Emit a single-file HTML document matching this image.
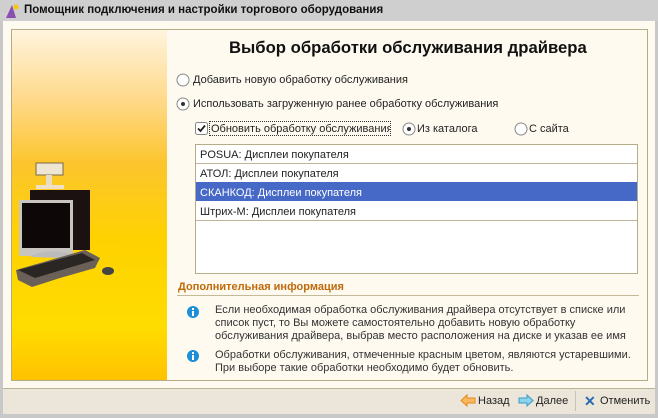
<!DOCTYPE html><html><head><meta charset="utf-8"><style>
*{margin:0;padding:0;box-sizing:border-box}
body{width:658px;height:418px;overflow:hidden;background:#c8c8c8;font-family:"Liberation Sans",sans-serif;font-size:11px;color:#222;position:relative}
.a{position:absolute}
.t{white-space:nowrap}
</style></head><body>
<div class="a" style="left:0;top:0;width:658px;height:21px;background:#cfcfcf"></div>
<svg class="a" style="left:4px;top:3px" width="16" height="16"><polygon points="2,15 8,2 12,15" fill="#8a4fb0"/><circle cx="12" cy="4" r="2.5" fill="#f2c800"/></svg>
<div class="a t" style="left:24px;top:4px;font-weight:bold;font-size:11.5px;color:#111">Помощник подключения и настройки торгового оборудования</div>
<div class="a" style="left:3px;top:21px;width:652px;height:393px;background:#fefaef"></div>
<div class="a" style="left:11px;top:29px;width:637px;height:352px;border:1px solid #b5ad88"></div>
<div class="a" style="left:12px;top:30px;width:155px;height:350px;background:linear-gradient(180deg,#fff4de 0%,#ffd98a 20%,#fcc52e 38%,#fed200 60%,#ffdc00 85%,#ffc200 100%)"></div>
<svg class="a" style="left:0;top:120px" width="167" height="200">
<rect x="36" y="43" width="27" height="12" fill="#eee6d2" stroke="#7a6a50"/><rect x="46" y="55" width="6" height="10" fill="#e8dcc4"/><rect x="36" y="65" width="28" height="4" fill="#eee0c8"/>
<rect x="30" y="70" width="60" height="60" fill="#1a1110"/>
<rect x="19" y="80" width="54" height="56" fill="#c8c4c0"/><rect x="22" y="83" width="48" height="45" fill="#0d0707"/>
<path d="M30 137 Q45 128 70 133 L60 138 Z" fill="#bbb"/>
<path d="M16 150 L85 130 L100 138 L95 148 L60 158 L32 167 L18 160 Z" fill="#6a6058"/>
<path d="M18 150 L82 133 L95 140 L35 158 Z" fill="#2a2624"/>
<ellipse cx="108" cy="151" rx="6" ry="4" fill="#444"/></svg>
<div class="a t" style="left:229px;top:38px;font-size:16.7px;font-weight:bold;color:#111">Выбор обработки обслуживания драйвера</div>
<svg class="a" style="left:176px;top:73px" width="14" height="14"><circle cx="7" cy="7" r="6" fill="#fff" stroke="#888"/></svg>
<div class="a t" style="left:193px;top:74px">Добавить новую обработку обслуживания</div>
<svg class="a" style="left:176px;top:97px" width="14" height="14"><circle cx="7" cy="7" r="6" fill="#fff" stroke="#888"/><circle cx="7" cy="7" r="2" fill="#333"/></svg>
<div class="a t" style="left:193px;top:98px">Использовать загруженную ранее обработку обслуживания</div>
<svg class="a" style="left:195px;top:122px" width="13" height="13"><rect x=".5" y=".5" width="12" height="12" rx="2" fill="#fff" stroke="#888"/><path d="M3 6.5l2.5 2.5L10 3.5" stroke="#222" stroke-width="1.8" fill="none"/></svg>
<div class="a t" style="left:209px;top:121px;border:1px dotted #333;padding:1px 1px 0;height:15px;width:182px;overflow:hidden">Обновить обработку обслуживания</div>
<svg class="a" style="left:402px;top:122px" width="14" height="14"><circle cx="7" cy="7" r="6" fill="#fff" stroke="#888"/><circle cx="7" cy="7" r="2" fill="#333"/></svg>
<div class="a t" style="left:417px;top:123px">Из каталога</div>
<svg class="a" style="left:514px;top:122px" width="14" height="14"><circle cx="7" cy="7" r="6" fill="#fff" stroke="#888"/></svg>
<div class="a t" style="left:529px;top:123px">С сайта</div>
<div class="a" style="left:195px;top:144px;width:443px;height:130px;background:#fff;border:1px solid #b5ad88"></div>
<div class="a" style="left:196px;top:163px;width:441px;height:1px;background:#bdb69a"></div>
<div class="a" style="left:196px;top:182px;width:441px;height:19px;background:#4668c6"></div>
<div class="a" style="left:196px;top:220px;width:441px;height:1px;background:#bdb69a"></div>
<div class="a t" style="left:200px;top:149px">POSUA: Дисплеи покупателя</div>
<div class="a t" style="left:200px;top:168px">АТОЛ: Дисплеи покупателя</div>
<div class="a t" style="left:200px;top:187px;color:#fff">СКАНКОД: Дисплеи покупателя</div>
<div class="a t" style="left:200px;top:206px">Штрих-М: Дисплеи покупателя</div>
<div class="a t" style="left:178px;top:281px;font-weight:bold;color:#c06a0c">Дополнительная информация</div>
<div class="a" style="left:177px;top:295px;width:462px;height:1px;background:#c4b998"></div>
<svg class="a" style="left:187px;top:306px" width="12" height="12"><circle cx="6" cy="6" r="6" fill="#1c8fd6"/><rect x="5" y="5" width="2" height="5" fill="#fff"/><rect x="5" y="2" width="2" height="2" fill="#fff"/></svg>
<svg class="a" style="left:187px;top:350px" width="12" height="12"><circle cx="6" cy="6" r="6" fill="#1c8fd6"/><rect x="5" y="5" width="2" height="5" fill="#fff"/><rect x="5" y="2" width="2" height="2" fill="#fff"/></svg>
<div class="a t" style="left:215px;top:304px;line-height:13px;font-size:11px;color:#333">Если необходимая обработка обслуживания драйвера отсутствует в списке или<br>список пуст, то Вы можете самостоятельно добавить новую обработку<br>обслуживания драйвера, выбрав место расположения на диске и указав ее имя</div>
<div class="a t" style="left:215px;top:349px;line-height:13px;font-size:11px;color:#333">Обработки обслуживания, отмеченные красным цветом, являются устаревшими.<br>При выборе такие обработки необходимо будет обновить.</div>
<div class="a" style="left:3px;top:388px;width:652px;height:26px;background:#ece6da;border-top:1px solid #b8b498"></div>
<div class="a" style="left:0;top:414px;width:658px;height:4px;background:#c8c8c8"></div>
<svg class="a" style="left:460px;top:394px" width="16" height="13"><path d="M1 6.5L7 1v3h8v5H7v3z" fill="#fbb860" stroke="#e48a1a"/></svg>
<div class="a t" style="left:478px;top:395px">Назад</div>
<svg class="a" style="left:518px;top:394px" width="16" height="13"><path d="M15 6.5L9 1v3H1v5h8v3z" fill="#8cd4ee" stroke="#3a9ac8"/></svg>
<div class="a t" style="left:536px;top:395px">Далее</div>
<div class="a" style="left:575px;top:391px;width:1px;height:20px;background:#c8c2b0"></div>
<div class="a t" style="left:584px;top:393px;font-weight:bold;color:#2a6ab0;font-size:14px">✕</div>
<div class="a t" style="left:600px;top:395px">Отменить</div>
</body></html>
